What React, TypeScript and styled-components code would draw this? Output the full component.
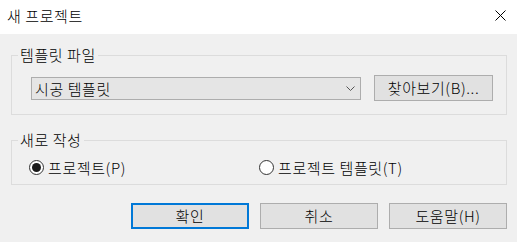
import React from 'react';
import styled, { createGlobalStyle } from 'styled-components';

const GlobalStyle = createGlobalStyle`
  html, body {
    margin: 0;
    padding: 0;
    background: #f0f0f0;
  }
  body {
    font-family: "Noto Sans CJK KR", "Noto Sans", "Liberation Sans", sans-serif;
    font-size: 15px;
    font-weight: 300;
    letter-spacing: 0.6px;
    color: #000;
  }
`;

const Window = styled.div`
  width: 517px;
  height: 242px;
  background: #f0f0f0;
  display: flex;
  flex-direction: column;
  overflow: hidden;
`;

const TitleBar = styled.div`
  height: 34px;
  flex-shrink: 0;
  background: #fff;
  display: flex;
  align-items: center;
  justify-content: space-between;
  padding: 0 11px 0 7px;
`;

const Title = styled.div`
  font-size: 15px;
  line-height: 18px;
  color: #000;
  margin-top: -2px;
`;

const CloseButton = styled.div`
  width: 12px;
  height: 12px;
  display: flex;
  align-items: center;
  justify-content: center;
  margin-top: -4px;
`;

const Body = styled.div`
  display: flex;
  flex-direction: column;
  padding: 0 10px 0 11px;
`;

const GroupBox = styled.fieldset<{ $top: number }>`
  margin: ${(p) => p.$top}px 0 0 0;
  padding: 0;
  border: 1px solid #dcdcdc;
  min-width: 0;
`;

const GroupLegend = styled.legend`
  margin-left: 6px;
  padding: 0 2px;
  font-size: 15px;
  line-height: 18px;
`;

const FileRow = styled.div`
  display: flex;
  align-items: center;
  gap: 13px;
  padding: 11px 13px 13px 19px;
`;

const Combo = styled.div`
  flex: 1;
  height: 23px;
  box-sizing: border-box;
  border: 1px solid #adadad;
  background: #e5e5e5;
  display: flex;
  align-items: center;
  justify-content: space-between;
  padding: 0 5px 0 3px;
  font-size: 15px;
`;

const Button = styled.div<{ $default?: boolean; $width: number }>`
  width: ${(p) => p.$width}px;
  height: 26px;
  box-sizing: border-box;
  border: ${(p) => (p.$default ? '2px solid #0078d7' : '1px solid #adadad')};
  background: #e1e1e1;
  display: flex;
  align-items: center;
  justify-content: center;
  font-size: 15px;
  line-height: 18px;
`;

const RadioRow = styled.div`
  display: grid;
  grid-template-columns: 230px 1fr;
  align-items: center;
  padding: 9px 13px 8px 17px;
`;

const RadioOption = styled.label`
  display: flex;
  align-items: center;
  gap: 4px;
  height: 18px;
  font-size: 15px;
`;

const RadioCircle = styled.span<{ $checked?: boolean }>`
  width: 15px;
  height: 15px;
  box-sizing: border-box;
  border-radius: 50%;
  border: 1px solid #333;
  background: #fff;
  display: flex;
  align-items: center;
  justify-content: center;
  &::after {
    content: '';
    display: ${(p) => (p.$checked ? 'block' : 'none')};
    width: 9px;
    height: 9px;
    border-radius: 50%;
    background: #1a1a1a;
  }
`;

const ButtonBar = styled.div`
  display: flex;
  justify-content: flex-end;
  gap: 11px;
  margin-top: 18px;
  padding-right: 0;
`;

export default function App() {
  return (
    <Window>
      <GlobalStyle />
      <TitleBar>
        <Title>새 프로젝트</Title>
        <CloseButton>
          <svg width="11" height="11" viewBox="0 0 11 11">
            <path d="M0.5 0.5 L10.5 10.5 M10.5 0.5 L0.5 10.5" stroke="#000" strokeWidth="1" />
          </svg>
        </CloseButton>
      </TitleBar>
      <Body>
        <GroupBox $top={12}>
          <GroupLegend>템플릿 파일</GroupLegend>
          <FileRow>
            <Combo>
              <span>시공 템플릿</span>
              <svg width="9" height="5" viewBox="0 0 9 5">
                <path d="M0.5 0.5 L4.5 4.5 L8.5 0.5" stroke="#555" strokeWidth="1" fill="none" />
              </svg>
            </Combo>
            <Button $width={119}>찾아보기(B)...</Button>
          </FileRow>
        </GroupBox>
        <GroupBox $top={16}>
          <GroupLegend>새로 작성</GroupLegend>
          <RadioRow>
            <RadioOption>
              <RadioCircle $checked />
              프로젝트(P)
            </RadioOption>
            <RadioOption>
              <RadioCircle />
              프로젝트 템플릿(T)
            </RadioOption>
          </RadioRow>
        </GroupBox>
        <ButtonBar>
          <Button $default $width={118}>확인</Button>
          <Button $width={118}>취소</Button>
          <Button $width={118}>도움말(H)</Button>
        </ButtonBar>
      </Body>
    </Window>
  );
}
